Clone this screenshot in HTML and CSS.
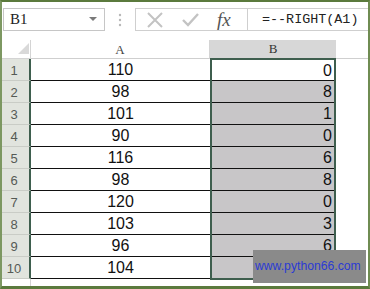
FILE: index.html
```html
<!DOCTYPE html>
<html lang="en">
<head>
    <meta charset="UTF-8">
    <title>RIGHT formula</title>
    <link rel="stylesheet" href="styles.css">
</head>
<body>
    <div class="window">
        <div class="formula-bar">
            <div class="name-box">
                <span>B1</span>
                <svg class="arrow" width="8" height="5" viewBox="0 0 8 5"><polygon points="0,0 8,0 4,4" fill="#7a7a7a"/></svg>
            </div>
            <div class="grip">
                <svg width="4" height="14" viewBox="0 0 4 14">
                    <circle cx="2" cy="2" r="1.2" fill="#b8b8b8"/>
                    <circle cx="2" cy="7" r="1.2" fill="#b8b8b8"/>
                    <circle cx="2" cy="12" r="1.2" fill="#b8b8b8"/>
                </svg>
            </div>
            <div class="buttons">
                <svg width="16" height="16" viewBox="0 0 16 16"><path d="M1 1 L15 15 M15 1 L1 15" stroke="#c3c3c3" stroke-width="2" fill="none"/></svg>
                <svg width="17" height="14" viewBox="0 0 17 14"><path d="M1 7 L6 12 L16 1" stroke="#c3c3c3" stroke-width="2.4" fill="none"/></svg>
                <span class="fx">fx</span>
            </div>
            <div class="formula">=--RIGHT(A1)</div>
        </div>

        <div class="sheet">
            <div class="col row-heads">
                <div class="corner">
                    <svg width="11" height="11" viewBox="0 0 11 11"><polygon points="11,0 11,11 0,11" fill="#d9d9d9"/></svg>
                </div>
                <div class="rh">1</div>
                <div class="rh">2</div>
                <div class="rh">3</div>
                <div class="rh">4</div>
                <div class="rh">5</div>
                <div class="rh">6</div>
                <div class="rh">7</div>
                <div class="rh">8</div>
                <div class="rh">9</div>
                <div class="rh">10</div>
                <div class="rh plain">11</div>
            </div>
            <div class="col col-a">
                <div class="ch">A</div>
                <div class="cell">110</div>
                <div class="cell">98</div>
                <div class="cell">101</div>
                <div class="cell">90</div>
                <div class="cell">116</div>
                <div class="cell">98</div>
                <div class="cell">120</div>
                <div class="cell">103</div>
                <div class="cell">96</div>
                <div class="cell">104</div>
            </div>
            <div class="col col-b">
                <div class="ch active">B</div>
                <div class="selection">
                    <div class="cell current">0</div>
                    <div class="cell">8</div>
                    <div class="cell">1</div>
                    <div class="cell">0</div>
                    <div class="cell">6</div>
                    <div class="cell">8</div>
                    <div class="cell">0</div>
                    <div class="cell">3</div>
                    <div class="cell">6</div>
                    <div class="cell">4</div>
                </div>
            </div>
            <div class="col col-rest">
                <div class="ch"></div>
            </div>
        </div>

        <div class="watermark">www.python66.com</div>
    </div>
</body>
</html>
```

FILE: styles.css
```css
* {
    box-sizing: border-box;
    margin: 0;
    padding: 0;
}

body {
    background-color: #fff;
    font-family: 'Liberation Sans', Arial, sans-serif;
}

.window {
    position: relative;
    width: 370px;
    height: 289px;
    border-top: 2px solid #5b7a3d;
    border-left: 2px solid #7d9862;
    border-right: 2px solid #6f8c52;
    border-bottom: 3px solid #5b7a3d;
    overflow: hidden;
    background-color: #fff;
}

/* formula bar */
.formula-bar {
    display: flex;
    height: 23px;
    margin: 6px 0 9px 1px;
}

.name-box {
    width: 102px;
    border: 1px solid #c6c6c6;
    display: flex;
    align-items: center;
    justify-content: space-between;
    padding: 0 7px 0 6px;
    font-family: 'Liberation Serif', serif;
    font-size: 15px;
    color: #222;
}

.grip {
    width: 30px;
    display: flex;
    align-items: center;
    justify-content: center;
}

.buttons {
    width: 113px;
    border: 1px solid #cfcfcf;
    display: flex;
    align-items: center;
    padding-left: 11px;
    gap: 19px;
}

.buttons svg:nth-child(2) {
    margin-left: 0;
}

.fx {
    font-family: 'Liberation Serif', serif;
    font-style: italic;
    font-size: 19px;
    color: #555;
    margin-left: -1px;
    line-height: 1;
}

.formula {
    flex: 1;
    border: 1px solid #cfcfcf;
    border-left: none;
    border-right: none;
    padding-left: 14px;
    font-family: 'Liberation Mono', monospace;
    font-size: 13.4px;
    line-height: 21px;
    color: #222;
}

/* sheet */
.sheet {
    display: flex;
}

.col {
    display: flex;
    flex-direction: column;
}

.row-heads {
    width: 29px;
}

.corner {
    height: 19px;
    border-bottom: 1px solid #d4d4d4;
    border-right: 1px solid #d4d4d4;
    display: flex;
    justify-content: flex-end;
    align-items: flex-end;
    padding: 0 1px 4px 0;
}

.rh {
    height: 22px;
    background-color: #e1e4de;
    border-bottom: 1px solid #c9ccc6;
    border-right: 2px solid #3e5e4e;
    font-size: 13px;
    color: #555a55;
    display: flex;
    align-items: center;
    justify-content: center;
    padding: 2px 3px 0 0;
}

.rh.plain {
    background-color: #fff;
    border-right: 1px solid #d4d4d4;
}

.col-a {
    width: 179px;
}

.ch {
    height: 19px;
    border-bottom: 1px solid #cfcfcf;
    border-right: 1px solid #d4d4d4;
    font-family: 'Liberation Serif', serif;
    font-size: 13px;
    color: #444;
    text-align: center;
    line-height: 19px;
}

.cell {
    height: 22px;
    border-bottom: 1px solid #111;
    font-size: 16px;
    color: #111;
    line-height: 22px;
    text-align: center;
}

.col-b {
    width: 126px;
}

.ch.active {
    height: 18px;
    border: none;
    background-color: #d7d7d7;
    line-height: 18px;
    color: #333;
}

.selection {
    border: 2px solid #3e5e4e;
}

.selection .cell {
    background-color: #c8c6c8;
    text-align: right;
    padding-right: 2px;
}

.selection .cell.current {
    background-color: #fff;
    height: 21px;
}

.selection .cell:last-child {
    border-bottom: none;
    height: 21px;
}

.col-rest {
    flex: 1;
}

.col-rest .ch {
    border-right: none;
}

.watermark {
    position: absolute;
    left: 251px;
    top: 248px;
    width: 113px;
    height: 33px;
    background-color: #8a8a8a;
    color: #2a3bd4;
    font-size: 12.2px;
    line-height: 33px;
    padding-left: 2px;
}
```
